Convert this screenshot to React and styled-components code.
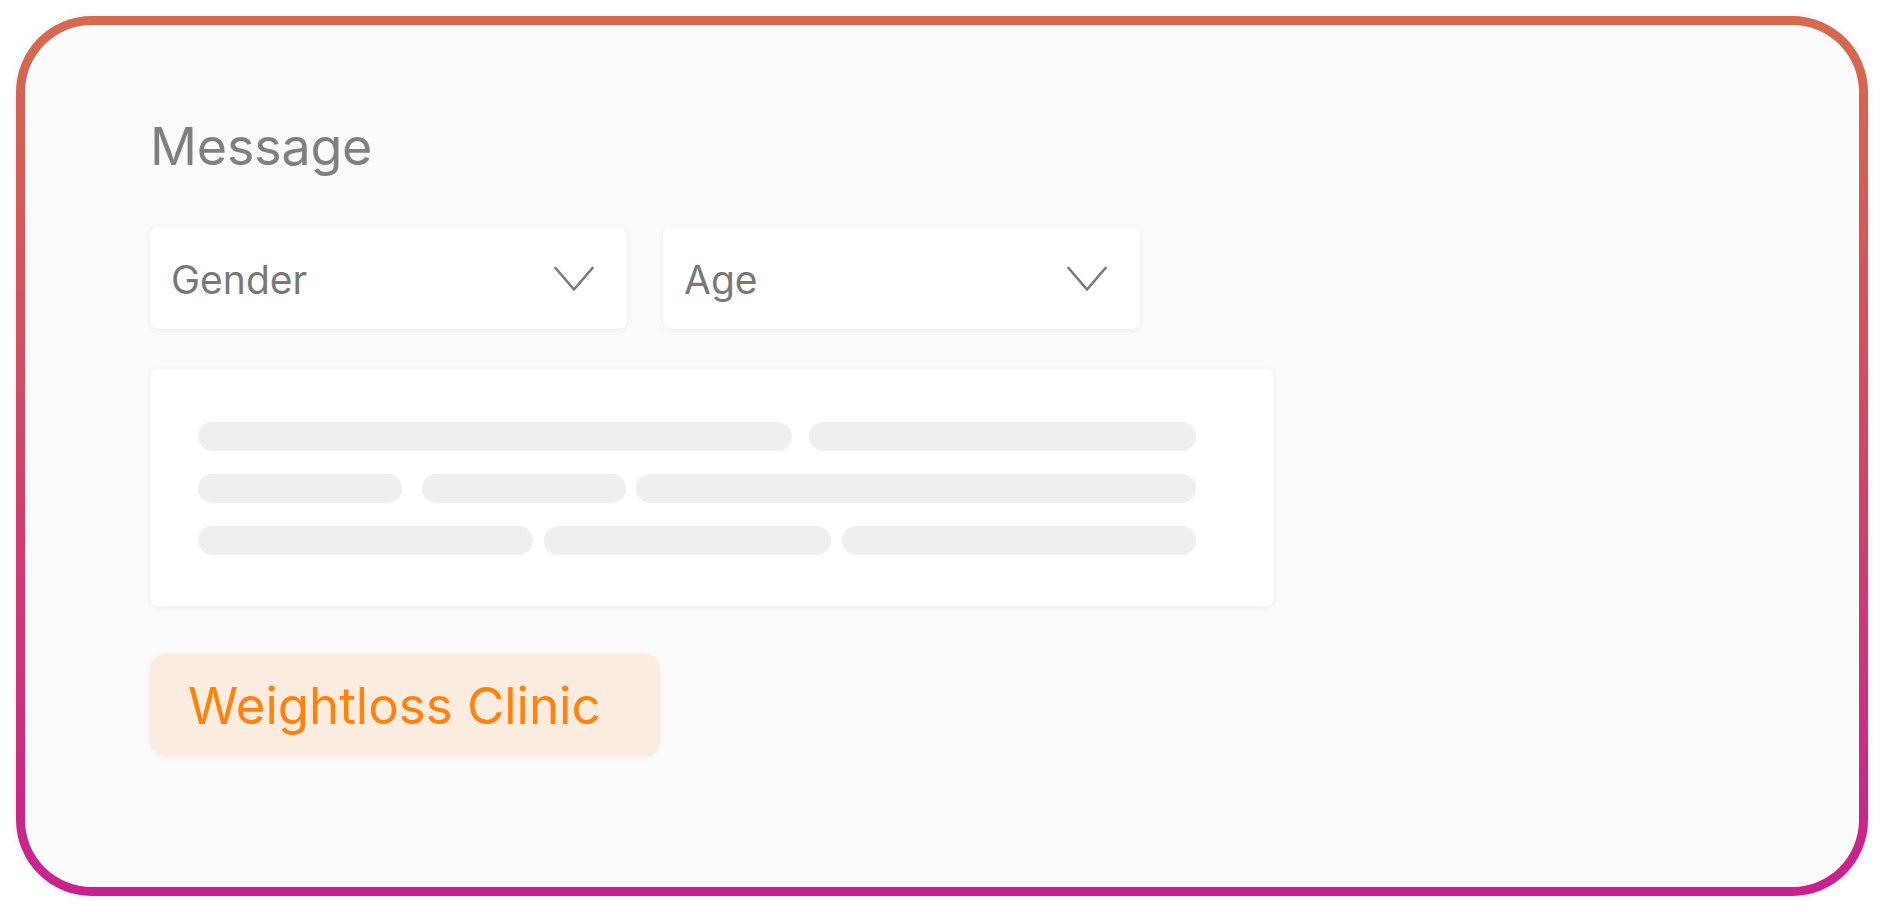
import React from "react";
import styled, { createGlobalStyle } from "styled-components";

const Global = createGlobalStyle`
  html, body {
    margin: 0;
    padding: 0;
    background: #ffffff;
  }
  body {
    font-family: Inter, "Noto Sans", "Liberation Sans", sans-serif;
  }
  * { box-sizing: border-box; }
`;

const Page = styled.div`
  padding: 16px;
  width: 1884px;
  height: 912px;
`;

const Frame = styled.div`
  height: 880px;
  border: 9px solid transparent;
  border-radius: 76px;
  background:
    linear-gradient(#fbfbfb, #fbfbfb) padding-box,
    linear-gradient(180deg, #d66a4e 0%, #d04a66 45%, #c8208f 100%) border-box;
  box-shadow: 0 0 6px 2px rgba(0, 0, 0, 0.05);
  padding: 96px 0 0 125px;
  display: flex;
  flex-direction: column;
  align-items: flex-start;
`;

const Title = styled.h1`
  margin: 0;
  font-size: 52px;
  line-height: 52px;
  font-weight: 400;
  color: #808080;
  letter-spacing: -0.2px;
`;

const Selects = styled.div`
  display: flex;
  gap: 36px;
  margin-top: 54px;
`;

const Select = styled.div`
  width: 477px;
  height: 102px;
  background: #ffffff;
  border-radius: 8px;
  box-shadow: 0 1px 6px rgba(0, 0, 0, 0.07);
  display: flex;
  align-items: center;
  justify-content: space-between;
  padding: 2px 33px 0 21px;
`;

const SelectLabel = styled.span`
  font-size: 39px;
  color: #787878;
  line-height: 1;
`;

const Chevron = () => (
  <svg width="40" height="26" viewBox="0 0 40 26" fill="none">
    <polyline
      points="1.5,2 20,23.5 38.5,2"
      stroke="#7a7a7a"
      strokeWidth="2.6"
      strokeLinecap="round"
      strokeLinejoin="round"
    />
  </svg>
);

const TextCard = styled.div`
  margin-top: 40px;
  width: 1124px;
  height: 237px;
  background: #ffffff;
  border-radius: 8px;
  box-shadow: 0 1px 6px rgba(0, 0, 0, 0.07);
  padding: 53px 0 0 48px;
  display: flex;
  flex-direction: column;
  gap: 23px;
`;

const Line = styled.div`
  display: flex;
  width: 998px;
`;

const Bar = styled.div`
  height: 29px;
  flex: 0 0 ${(p) => p.$w}px;
  margin-left: ${(p) => p.$gap || 0}px;
  background: #efefef;
  border-radius: 15px;
`;

const Tag = styled.div`
  margin-top: 48px;
  width: 510px;
  height: 102px;
  background: #fcebdf;
  border-radius: 16px;
  box-shadow: 0 1px 6px rgba(0, 0, 0, 0.06);
  display: flex;
  align-items: center;
  padding-left: 38px;
  font-size: 51px;
  color: #ff820f;
  line-height: 1;
`;

const lines = [
  [
    { w: 594 },
    { w: 387, gap: 17 },
  ],
  [
    { w: 204 },
    { w: 204, gap: 20 },
    { w: 560, gap: 10 },
  ],
  [
    { w: 335 },
    { w: 287, gap: 11 },
    { w: 354, gap: 11 },
  ],
];

export default function App() {
  return (
    <>
      <Global />
      <Page>
        <Frame>
          <Title>Message</Title>
          <Selects>
            <Select>
              <SelectLabel>Gender</SelectLabel>
              <Chevron />
            </Select>
            <Select>
              <SelectLabel>Age</SelectLabel>
              <Chevron />
            </Select>
          </Selects>
          <TextCard>
            {lines.map((line, i) => (
              <Line key={i}>
                {line.map((b, j) => (
                  <Bar key={j} $w={b.w} $gap={b.gap} />
                ))}
              </Line>
            ))}
          </TextCard>
          <Tag>Weightloss Clinic</Tag>
        </Frame>
      </Page>
    </>
  );
}
